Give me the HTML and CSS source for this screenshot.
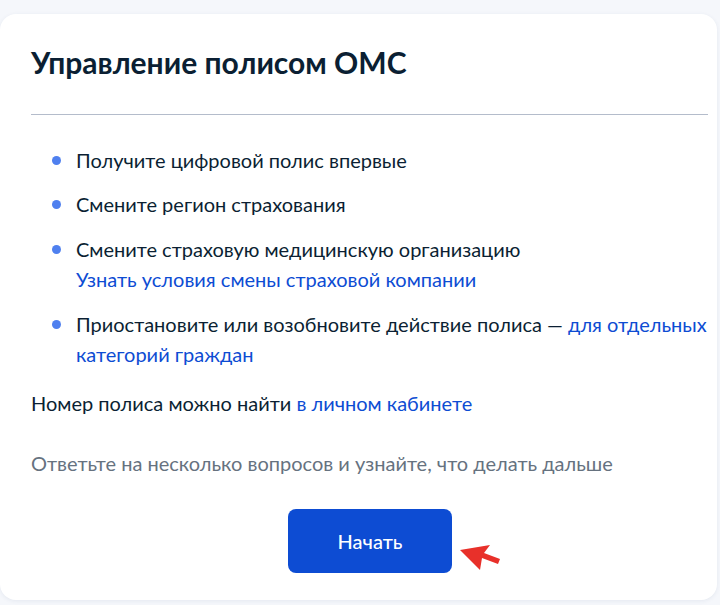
FILE: index.html
```html
<!DOCTYPE html>
<html lang="ru">
<head>
<meta charset="utf-8">
<link rel="stylesheet" href="styles.css">
</head>
<body>
<div class="card">
  <h1 class="title">Управление полисом ОМС</h1>
  <hr class="divider">
  <ul class="list">
    <li>Получите цифровой полис впервые</li>
    <li>Смените регион страхования</li>
    <li>Смените страховую медицинскую организацию<br><a href="#">Узнать условия смены страховой компании</a></li>
    <li>Приостановите или возобновите действие полиса — <a href="#">для отдельных категорий граждан</a></li>
  </ul>
  <p class="note">Номер полиса можно найти <a href="#">в личном кабинете</a></p>
  <p class="hint">Ответьте на несколько вопросов и узнайте, что делать дальше</p>
  <div class="actions">
    <button class="btn">Начать</button>
    <svg class="arrow" width="44" height="30" viewBox="0 0 44 30">
      <path d="M2 7 L32 2 L26 10 L42 16 L40 21 L24 15 L22 27 Z" fill="#e8302a"/>
    </svg>
  </div>
</div>
</body>
</html>
```

FILE: styles.css
```css
* { box-sizing: border-box; }
html, body { margin: 0; padding: 0; }
body {
  background: #f5f7fb;
  font-family: Lato, "Noto Sans", sans-serif;
  color: #0b1f33;
  width: 720px;
  height: 605px;
  overflow: hidden;
}
.card {
  margin-top: 14px;
  width: 717px;
  height: 586px;
  background: #fff;
  border-radius: 16px;
  box-shadow: 0 1px 4px rgba(40, 60, 110, 0.08);
  padding: 30px 2px 0 31px;
}
.title {
  margin: 0;
  font-size: 30px;
  line-height: 36px;
  font-weight: 700;
  letter-spacing: 0;
}
.divider {
  margin: 34px 7px 0 0;
  border: 0;
  border-top: 1px solid #b4bccb;
  height: 0;
}
.list {
  list-style: none;
  margin: 30px 0 0 0;
  padding: 0 0 0 45px;
}
.list li {
  position: relative;
  font-size: 20px;
  line-height: 30px;
  margin-bottom: 15px;
}
.list li:first-child { margin-bottom: 14px; }
.list li::before {
  content: "";
  position: absolute;
  left: -24px;
  top: 11px;
  width: 9px;
  height: 9px;
  border-radius: 50%;
  background: #4f80ef;
}
a { color: #0d4cd3; text-decoration: none; }
.note {
  margin: 19px 0 0 0;
  font-size: 20px;
  line-height: 30px;
}
.hint {
  margin: 30px 0 0 0;
  font-size: 20px;
  line-height: 30px;
  color: #66727f;
}
.actions {
  margin-top: 31px;
  display: flex;
  align-items: flex-end;
  padding-left: 257px;
}
.btn {
  width: 164px;
  height: 64px;
  border: 0;
  border-radius: 8px;
  background: #0d4cd3;
  color: #fff;
  font-family: Lato, "Noto Sans", sans-serif;
  font-size: 20px;
  font-weight: 500;
}
.arrow {
  margin-left: 6px;
}
```
